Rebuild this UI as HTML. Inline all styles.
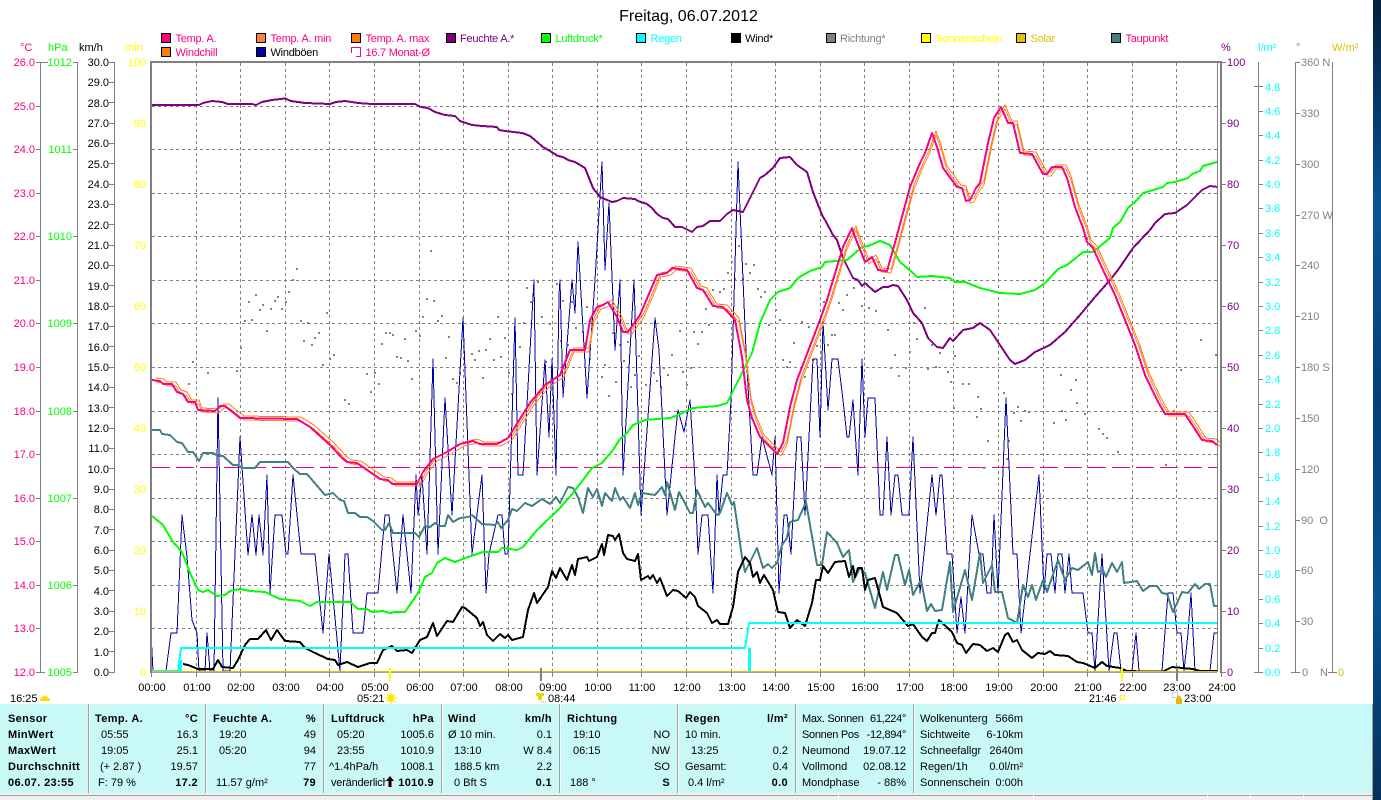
<!DOCTYPE html>
<html lang="de"><head><meta charset="utf-8"><title>Freitag, 06.07.2012</title>
<style>
html,body{margin:0;padding:0;background:#fff;overflow:hidden}
svg{display:block}
text{font-family:"Liberation Sans",sans-serif;font-size:11px;white-space:pre}
.b{font-weight:bold;letter-spacing:.35px}
.e{text-anchor:end}
.m{text-anchor:middle}
.l text{letter-spacing:-.25px}
.s{letter-spacing:-.3px}
.c{shape-rendering:crispEdges}
polyline{fill:none;stroke-linejoin:round}
</style></head><body>
<svg width="1381" height="800" viewBox="0 0 1381 800" xmlns="http://www.w3.org/2000/svg">
<defs>
<linearGradient id="desk" x1="0" y1="0" x2="0" y2="1">
<stop offset="0" stop-color="#04203f"/><stop offset=".14" stop-color="#063a6c"/><stop offset=".26" stop-color="#0a5494"/><stop offset=".5" stop-color="#073f78"/><stop offset=".75" stop-color="#085290"/><stop offset="1" stop-color="#05305c"/>
</linearGradient>
<polyline id="temp" points="152,380 160,381 163,384 172,384 177,392 183,394 188,402 195,402 198,410 215,411 220,406 225,406 240,418 297,419 310,427 330,445 342,458 347,462 357,463 380,479 388,480 392,484 417,484 423,472 433,459 447,452 460,444 473,441 480,444 497,444 508,438 530,403 545,385 560,375 570,350 585,350 590,320 597,307 603,305 608,302 617,317 623,332 628,332 640,315 657,275 667,273 672,268 687,270 697,288 703,290 713,306 723,307 735,320 742,357 747,400 752,418 760,437 777,454 783,443 790,407 797,380 820,320 827,300 843,247 852,228 855,237 865,262 872,257 878,270 887,271 893,250 910,187 920,163 925,153 932,133 937,147 943,168 957,187 962,188 966,201 970,200 976,188 980,183 988,143 994,118 1001,107 1008,123 1013,123 1020,153 1032,154 1043,174 1047,174 1052,167 1062,167 1067,178 1075,207 1083,228 1087,242 1093,248 1103,270 1115,295 1125,320 1135,345 1145,375 1157,400 1165,414 1185,414 1202,440 1212,441 1217,445"/>
</defs>
<rect width="1381" height="800" fill="#fff"/>

<!-- title -->
<text x="688.500" y="21" class="m" style="font-size:16px" fill="#000">Freitag, 06.07.2012</text>

<!-- legend -->
<g class="c" stroke="#000" stroke-width="1">
<rect x="161.500" y="33.500" width="9" height="9" fill="#ff0080"/>
<rect x="256.500" y="33.500" width="9" height="9" fill="#ff8040"/>
<rect x="351.500" y="33.500" width="9" height="9" fill="#ff8000"/>
<rect x="446.500" y="33.500" width="9" height="9" fill="#800080"/>
<rect x="541.500" y="33.500" width="9" height="9" fill="#00ff00"/>
<rect x="636.500" y="33.500" width="9" height="9" fill="#00ffff"/>
<rect x="731.500" y="33.500" width="9" height="9" fill="#000"/>
<rect x="826.500" y="33.500" width="9" height="9" fill="#808080"/>
<rect x="921.500" y="33.500" width="9" height="9" fill="#ffff00"/>
<rect x="1016.500" y="33.500" width="9" height="9" fill="#e0c000"/>
<rect x="1111.500" y="33.500" width="9" height="9" fill="#408080"/>
<rect x="161.500" y="47.500" width="9" height="9" fill="#ff8000"/>
<rect x="256.500" y="47.500" width="9" height="9" fill="#0000a0"/>
</g>
<path class="c" d="M351.500 53V47.500H360.500V56.500H356" fill="none" stroke="#ff0080"/>
<g class="l">
<text x="175.500" y="42" fill="#ff0080">Temp. A.</text>
<text x="270.500" y="42" fill="#ff0080">Temp. A. min</text>
<text x="365.500" y="42" fill="#ff0080">Temp. A. max</text>
<text x="460" y="42" fill="#800080">Feuchte A.*</text>
<text x="555.500" y="42" fill="#00ff00">Luftdruck*</text>
<text x="650.500" y="42" fill="#00ffff">Regen</text>
<text x="745" y="42" fill="#000">Wind*</text>
<text x="840" y="42" fill="#808080">Richtung*</text>
<text x="935.500" y="42" fill="#ffff00">Sonnenschein</text>
<text x="1030.500" y="42" fill="#e0c000">Solar</text>
<text x="1125.500" y="42" fill="#ff0080">Taupunkt</text>
<text x="175.500" y="56" fill="#ff0080">Windchill</text>
<text x="270.500" y="56" fill="#000">Windböen</text>
<text x="365.500" y="56" fill="#ff0080">16.7 Monat-Ø</text>
</g>

<!-- axis headers -->
<text x="20" y="51" fill="#ff0080">°C</text>
<text x="48" y="51" fill="#00ff00">hPa</text>
<text x="79" y="51" fill="#000">km/h</text>
<text x="125" y="51" fill="#ffff00">min</text>
<text x="1221" y="51" fill="#800080">%</text>
<text x="1258" y="51" fill="#00ffff">l/m²</text>
<text x="1296" y="51" fill="#808080">°</text>
<text x="1332" y="51" fill="#e0c000">W/m²</text>

<!-- left axes -->
<g class="c" fill="none" stroke="#808080">
<path d="M40.500 62V672M77.500 62V672M114.500 62V672"/>
<path d="M36 62.500H48M36 106.500H41M36 149.500H41M36 193.500H41M36 236.500H41M36 280.500H41M36 323.500H41M36 367.500H41M36 411.500H41M36 454.500H41M36 498.500H41M36 541.500H41M36 585.500H41M36 628.500H41M36 672.500H45"/>
<path d="M73 62.500H78M73 149.500H78M73 236.500H78M73 323.500H78M73 411.500H78M73 498.500H78M73 585.500H78M73 672.500H78"/>
<path d="M109 62.500H115M109 82.500H115M109 102.500H115M109 123.500H115M109 143.500H115M109 163.500H115M109 184.500H115M109 204.500H115M109 224.500H115M109 245.500H115M109 265.500H115M109 285.500H115M109 306.500H115M109 326.500H115M109 346.500H115M109 367.500H115M109 387.500H115M109 407.500H115M109 428.500H115M109 448.500H115M109 468.500H115M109 489.500H115M109 509.500H115M109 529.500H115M109 550.500H115M109 570.500H115M109 590.500H115M109 611.500H115M109 631.500H115M109 651.500H115M109 672.500H115"/>
</g>
<g class="e" fill="#ff0080">
<text x="35" y="66">26.0</text><text x="35" y="110">25.0</text><text x="35" y="153">24.0</text><text x="35" y="197">23.0</text><text x="35" y="240">22.0</text><text x="35" y="284">21.0</text><text x="35" y="327">20.0</text><text x="35" y="371">19.0</text><text x="35" y="415">18.0</text><text x="35" y="458">17.0</text><text x="35" y="502">16.0</text><text x="35" y="545">15.0</text><text x="35" y="589">14.0</text><text x="35" y="632">13.0</text><text x="35" y="676">12.0</text>
</g>
<g class="e" fill="#00ff00">
<text x="72" y="66">1012</text><text x="72" y="153">1011</text><text x="72" y="240">1010</text><text x="72" y="327">1009</text><text x="72" y="415">1008</text><text x="72" y="502">1007</text><text x="72" y="589">1006</text><text x="72" y="676">1005</text>
</g>
<g class="e" fill="#000">
<text x="109" y="66">30.0</text><text x="109" y="86">29.0</text><text x="109" y="107">28.0</text><text x="109" y="127">27.0</text><text x="109" y="147">26.0</text><text x="109" y="168">25.0</text><text x="109" y="188">24.0</text><text x="109" y="208">23.0</text><text x="109" y="229">22.0</text><text x="109" y="249">21.0</text><text x="109" y="269">20.0</text><text x="109" y="290">19.0</text><text x="109" y="310">18.0</text><text x="109" y="330">17.0</text><text x="109" y="351">16.0</text><text x="109" y="371">15.0</text><text x="109" y="391">14.0</text><text x="109" y="412">13.0</text><text x="109" y="432">12.0</text><text x="109" y="452">11.0</text><text x="109" y="473">10.0</text><text x="109" y="493">9.0</text><text x="109" y="513">8.0</text><text x="109" y="534">7.0</text><text x="109" y="554">6.0</text><text x="109" y="574">5.0</text><text x="109" y="595">4.0</text><text x="109" y="615">3.0</text><text x="109" y="635">2.0</text><text x="109" y="656">1.0</text><text x="109" y="676">0.0</text>
</g>
<g class="e" fill="#ffff00">
<text x="146" y="66">100</text><text x="146" y="127">90</text><text x="146" y="188">80</text><text x="146" y="249">70</text><text x="146" y="310">60</text><text x="146" y="371">50</text><text x="146" y="432">40</text><text x="146" y="493">30</text><text x="146" y="554">20</text><text x="146" y="615">10</text><text x="146" y="676">0</text>
</g>

<!-- grid -->
<g class="c" fill="none" stroke="#808080" stroke-dasharray="3 3">
<path d="M152 106.500H1217M152 149.500H1217M152 193.500H1217M152 236.500H1217M152 280.500H1217M152 323.500H1217M152 367.500H1217M152 411.500H1217M152 454.500H1217M152 498.500H1217M152 541.500H1217M152 585.500H1217M152 628.500H1217"/>
<path d="M196.500 63V672M240.500 63V672M285.500 63V672M329.500 63V672M374.500 63V672M419.500 63V672M463.500 63V672M508.500 63V672M552.500 63V672M597.500 63V672M641.500 63V672M686.500 63V672M731.500 63V672M775.500 63V672M820.500 63V672M864.500 63V672M909.500 63V672M953.500 63V672M998.500 63V672M1043.500 63V672M1087.500 63V672M1132.500 63V672M1176.500 63V672"/>
</g>
<path class="c" d="M152 467.500H1217" stroke="#ff0080" stroke-dasharray="18 6" fill="none"/>

<!-- wind direction dots -->
<path class="c" fill="none" stroke="#808080" stroke-width="2" d="M192 362h2M188 384h2M207 373h2M236 371h2M240 348h2M244 321h2M251 320h2M248 302h2M255 295h2M262 305h2M259 310h2M266 331h2M270 309h2M274 301h2M277 297h2M281 309h2M285 302h2M288 292h2M292 280h2M296 269h2M300 321h2M307 323h2M303 341h2M311 345h2M314 338h2M318 333h2M326 313h2M322 365h2M329 359h2M333 355h2M344 400h2M348 404h2M366 374h2M374 373h2M370 392h2M378 384h2M381 344h2M385 333h2M389 333h2M392 335h2M396 357h2M400 358h2M404 339h2M407 361h2M411 379h2M415 331h2M419 336h2M422 317h2M426 299h2M433 301h2M430 251h2M437 321h2M441 316h2M448 337h2M445 358h2M452 379h2M456 383h2M459 373h2M471 354h2M474 360h2M478 351h2M485 350h2M482 378h2M489 339h2M493 360h2M497 317h2M500 357h2M504 338h2M508 373h2M511 394h2M523 323h2M519 347h2M526 288h2M530 302h2M537 282h2M541 317h2M545 362h2M549 324h2M556 284h2M560 341h2M562 301h2M571 302h2M575 328h2M586 307h2M567 345h2M582 332h2M589 359h2M604 365h2M601 377h2M612 333h2M615 382h2M608 396h2M623 361h2M627 342h2M619 345h2M630 387h2M634 375h2M638 356h2M645 385h2M653 373h2M656 381h2M660 387h2M663 368h2M667 375h2M671 355h2M679 331h2M682 372h2M686 385h2M690 368h2M693 332h2M697 344h2M701 332h2M705 309h2M708 325h2M712 290h2M719 292h2M723 289h2M727 273h2M731 262h2M734 279h2M738 246h2M742 279h2M745 264h2M749 273h2M753 265h2M757 289h2M760 297h2M764 292h2M768 325h2M775 310h2M779 320h2M782 360h2M786 367h2M789 362h2M793 343h2M801 322h2M804 377h2M808 327h2M812 360h2M816 346h2M823 302h2M827 345h2M831 335h2M834 335h2M838 303h2M842 310h2M846 295h2M853 288h2M861 306h2M868 308h2M875 311h2M878 262h2M883 278h2M887 330h2M890 368h2M894 355h2M898 376h2M905 368h2M909 352h2M913 323h2M916 339h2M920 323h2M924 308h2M927 369h2M931 345h2M935 367h2M939 353h2M947 372h2M950 382h2M954 356h2M962 384h2M968 384h2M977 397h2M953 408h2M976 417h2M980 409h2M987 441h2M983 468h2M1006 459h2M1008 441h2M1013 413h2M1017 407h2M1020 421h2M1024 411h2M1028 412h2M1053 423h2M1061 411h2M1065 420h2M1076 403h2M1084 414h2M1098 429h2M1102 434h2M1106 438h2M1117 452h2M1165 465h2M1173 411h2M1003 393h2M1060 375h2M1070 390h2M1075 380h2M1180 370h2M1200 340h2M1215 355h2"/>

<!-- gusts -->
<polyline class="c" stroke="#0000a0" stroke-width="1" points="151,633 153,671 166,671 171,633 177,633 182,515 187,557 192,620 197,633 199,671 205,671 207,633 210,671 214,671 218,398 223,671 230,671 240,437 248,555 252,515 256,555 259,515 263,555 267,475 270,593 275,515 282,515 286,554 288,554 293,475 301,554 315,554 323,633 329,554 340,671 345,554 348,554 353,633 363,633 367,593 378,593 385,515 389,515 397,593 403,515 411,593 416,475 418,515 422,475 427,554 433,359 438,554 445,398 452,515 463,318 472,554 482,475 486,593 489,554 498,515 502,515 505,554 508,554 515,318 518,475 523,475 534,280 537,475 545,360 549,437 552,359 556,475 559,295 560,280 563,397 572,280 575,313 578,242 587,398 595,280 602,162 605,270 609,203 615,350 620,280 623,475 634,280 641,515 655,318 659,350 667,515 675,437 678,410 684,432 690,400 695,480 698,554 702,515 708,515 713,593 717,475 719,515 723,475 727,475 731,400 738,162 746,350 753,475 757,475 762,437 772,475 775,437 779,593 784,515 787,515 791,554 797,437 801,437 805,515 813,359 817,359 820,437 823,322 828,410 832,359 838,359 843,400 847,437 849,437 853,400 858,475 862,359 865,437 868,398 875,398 880,515 883,515 887,437 891,515 895,475 898,475 902,515 909,515 913,437 920,593 932,475 936,515 940,475 942,475 947,554 952,554 957,633 961,597 965,633 972,515 979,554 983,554 987,593 991,593 994,515 998,593 1006,398 1013,554 1017,554 1021,633 1039,475 1044,593 1047,554 1051,554 1055,593 1058,554 1062,554 1065,593 1069,554 1072,593 1083,593 1088,633 1092,633 1095,671 1102,554 1109,671 1114,633 1117,633 1121,671 1132,671 1136,633 1139,671 1162,671 1168,593 1173,593 1177,633 1181,633 1184,671 1188,633 1191,593 1195,671 1210,671 1214,633 1217,633"/>

<!-- dewpoint -->
<polyline class="c" stroke="#408080" stroke-width="2" points="150,430 160,430 162,434 170,435 177,442 182,443 188,452 193,452 199,461 203,453 213,453 218,456 223,456 233,465 237,465 242,468 255,468 260,462 288,462 293,468 300,474 307,474 325,495 333,493 340,500 344,501 348,513 355,513 360,517 367,517 373,521 382,530 385,530 389,523 393,533 415,533 419,537 425,526 430,527 435,523 440,526 445,526 448,515 453,522 460,518 468,517 472,515 482,524 495,525 498,522 501,528 508,520 512,509 517,511 525,503 532,506 542,499 550,504 556,497 560,503 568,487 573,488 578,497 583,513 588,488 593,497 597,489 602,506 605,493 612,501 615,488 620,500 623,497 630,508 635,493 638,505 642,493 655,495 662,487 665,495 667,482 675,510 679,492 685,503 690,513 693,513 697,490 705,507 708,503 717,515 720,513 727,493 732,505 734,502 742,557 745,572 757,548 763,568 768,564 772,568 777,563 782,545 787,538 790,522 798,520 806,502 817,565 822,565 827,532 837,543 843,557 849,550 853,582 860,568 865,573 875,608 883,572 887,590 895,555 898,555 905,585 909,570 913,595 921,580 927,611 931,604 935,611 942,610 950,562 953,612 965,570 972,600 980,553 983,583 992,565 995,592 1002,592 1008,618 1017,623 1023,585 1028,597 1032,585 1036,600 1043,580 1047,592 1058,560 1065,580 1072,568 1078,570 1088,562 1092,575 1095,553 1098,572 1103,570 1106,577 1112,563 1117,572 1122,562 1124,583 1137,581 1143,591 1150,586 1157,586 1162,593 1167,594 1173,612 1182,592 1188,593 1195,584 1199,589 1205,584 1210,584 1214,606 1217,606"/>

<!-- wind -->
<polyline class="c" stroke="#000" stroke-width="2" points="183,664 188,665 198,669 213,669 218,660 222,667 233,668 238,660 245,645 250,639 258,639 266,630 271,640 277,630 285,641 300,642 305,648 315,653 328,659 335,660 338,665 347,662 358,667 370,663 377,663 383,650 392,646 397,651 407,650 412,653 420,640 427,637 433,623 437,636 447,621 453,622 462,607 465,608 477,618 480,626 483,622 487,635 493,641 500,634 505,638 508,635 512,640 523,637 528,610 534,593 537,603 548,587 552,571 556,578 560,568 567,580 572,565 575,575 578,559 587,557 589,561 597,557 602,544 604,555 608,535 613,536 615,540 619,534 623,553 627,559 635,561 638,554 641,580 648,576 650,579 653,575 657,583 660,578 667,596 673,590 678,591 686,598 690,592 695,597 698,606 707,613 712,623 717,620 720,624 728,624 733,607 738,572 745,557 750,563 753,577 757,572 760,583 764,575 773,590 778,612 785,613 790,628 797,620 805,626 812,603 816,580 820,580 823,566 828,573 835,562 845,561 849,577 853,566 855,577 858,568 862,568 865,590 868,580 875,578 883,607 897,613 908,626 913,624 922,637 927,641 932,633 935,633 939,620 952,632 957,643 962,645 966,653 973,644 980,645 987,651 993,648 998,652 1005,635 1008,633 1013,642 1017,640 1022,650 1032,658 1038,653 1045,654 1050,651 1055,655 1068,656 1077,662 1083,663 1095,668 1102,662 1107,666 1120,668 1127,671 1162,672 1172,667 1193,669 1200,671 1217,671"/>

<!-- rain -->
<rect x="179" y="660" width="3" height="12" fill="#00ffff" class="c"/>
<rect x="748" y="648" width="3" height="24" fill="#00ffff" class="c"/>
<polyline class="c" stroke="#00ffff" stroke-width="2" points="152,671 178,671 181,648 745,648 749,623 1217,623"/>

<!-- humidity -->
<polyline class="c" stroke="#800080" stroke-width="2" points="152,105 199,105 203,103 212,101 222,102 228,104 252,104 256,105 262,102 272,100 285,98.500 291,101 305,103 330,104 336,102 345,101 358,103 372,104 415,104 421,107 428,108 435,112 445,115 455,116 460,121 472,125 482,126 497,127 499,130 505,131 522,133 525,134 530,136 536,141 543,147 550,151 558,156 563,157 568,160 575,162 585,168 593,188 600,197 612,202 617,201 623,198 635,199 638,201 647,204 652,208 657,214 663,218 668,219 675,227 682,227 692,232 697,227 703,226 710,221 720,221 727,214 733,210 743,212 753,192 760,178 765,175 773,168 780,158 790,157 797,165 807,172 813,192 822,215 825,220 833,235 837,240 843,258 853,278 858,280 862,286 865,283 875,292 883,287 888,287 893,285 898,286 907,300 913,313 922,323 928,338 937,347 943,348 950,338 953,341 963,330 973,328 980,323 990,330 1000,345 1010,360 1015,364 1025,360 1035,352 1050,345 1065,332 1080,315 1095,297 1110,280 1118,270 1133,248 1150,230 1155,223 1165,214 1175,213 1187,205 1202,190 1210,186 1218,187"/>

<!-- pressure -->
<polyline class="c" stroke="#00ff00" stroke-width="2" points="152,516 163,525 173,542 182,552 190,573 198,590 203,592 208,590 217,596 225,595 230,591 240,589 250,591 265,592 280,599 300,601 310,606 317,602 350,602 358,609 367,609 372,612 383,611 390,613 395,612 405,612 418,593 425,577 432,573 437,563 445,558 455,562 468,557 483,552 498,552 502,548 517,550 523,547 537,530 560,508 573,493 583,480 592,468 602,463 613,450 620,439 627,433 633,425 645,420 670,418 678,415 693,408 717,406 727,403 740,377 752,353 760,323 770,300 778,292 790,288 798,278 810,271 822,267 825,262 847,260 862,247 868,246 880,241 890,245 900,262 913,273 917,277 932,276 950,278 955,282 965,282 980,288 1000,293 1020,294 1035,290 1045,283 1058,269 1067,265 1077,257 1083,252 1093,252 1110,238 1113,228 1120,222 1128,208 1137,200 1143,193 1150,191 1163,187 1167,183 1175,182 1188,178 1192,174 1200,171 1203,166 1217,162"/>

<!-- temperature family -->
<use class="c" href="#temp" transform="translate(4,2)" stroke="#ff8040" stroke-width="1" fill="none"/>
<use class="c" href="#temp" transform="translate(4,-2)" stroke="#ff8000" stroke-width="1" fill="none"/>
<use class="c" href="#temp" stroke="#ff0080" stroke-width="2" fill="none"/>

<!-- frame -->
<g class="c">
<rect x="150" y="61" width="2" height="612" fill="#808080"/>
<rect x="150" y="61" width="1072" height="2" fill="#808080"/>
<rect x="1220" y="61" width="2" height="612" fill="#808080"/>
<rect x="1217" y="63" width="1" height="609" fill="#808080"/>
<rect x="152" y="671" width="1065" height="1" fill="#e0c000"/>
<rect x="152" y="672" width="1065" height="1" fill="#a0a0a0"/>
</g>

<!-- x ticks -->
<path class="c" fill="none" stroke="#808080" d="M151.500 672V677M196.500 672V677M240.500 672V677M285.500 672V677M329.500 672V677M374.500 672V677M419.500 672V677M463.500 672V677M508.500 672V677M552.500 672V677M597.500 672V677M641.500 672V677M686.500 672V677M731.500 672V677M775.500 672V677M820.500 672V677M864.500 672V677M909.500 672V677M953.500 672V677M998.500 672V677M1043.500 672V677M1087.500 672V677M1132.500 672V677M1176.500 672V677M1221.500 672V677"/>
<rect x="389" y="668" width="2" height="13" fill="#ffff00"/>
<rect x="540" y="668" width="2" height="13" fill="#808080"/>
<rect x="1121" y="668" width="2" height="13" fill="#ffff00"/>
<rect x="1176" y="668" width="2" height="13" fill="#808080"/>

<g class="m" fill="#000">
<text x="152" y="691">00:00</text><text x="197" y="691">01:00</text><text x="241" y="691">02:00</text><text x="286" y="691">03:00</text><text x="330" y="691">04:00</text><text x="375" y="691">05:00</text><text x="420" y="691">06:00</text><text x="464" y="691">07:00</text><text x="509" y="691">08:00</text><text x="553" y="691">09:00</text><text x="598" y="691">10:00</text><text x="642" y="691">11:00</text><text x="687" y="691">12:00</text><text x="732" y="691">13:00</text><text x="776" y="691">14:00</text><text x="821" y="691">15:00</text><text x="865" y="691">16:00</text><text x="910" y="691">17:00</text><text x="954" y="691">18:00</text><text x="999" y="691">19:00</text><text x="1044" y="691">20:00</text><text x="1088" y="691">21:00</text><text x="1133" y="691">22:00</text><text x="1177" y="691">23:00</text><text x="1222" y="691">24:00</text>
</g>

<!-- sun/moon markers -->
<text x="10" y="702">16:25</text>
<path d="M40 701a5 5 0 0 1 10 0z" fill="#ffe000"/>
<text x="357" y="702">05:21</text>
<circle cx="391" cy="698" r="3.500" fill="#ffe800"/>
<path d="M391 692v12M385 698h12M387 694l8 8M395 694l-8 8" stroke="#ffe800" fill="none"/>
<path d="M536 693h8v3h-2v3l-2 2-2-2v-3h-2z" fill="#e8d800"/>
<path d="M541 702h6" stroke="#a0a0e0" stroke-dasharray="1 1"/>
<text x="548" y="702">08:44</text>
<text x="1089" y="702">21:46</text>
<rect x="1120.500" y="695.500" width="4" height="4" fill="none" stroke="#ffff00"/>
<rect x="1172.500" y="692.500" width="5" height="5" fill="none" stroke="#9090e0" stroke-dasharray="1 1"/>
<path d="M1179 695l3 4v5h-6v-5z" fill="#e8b800"/>
<text x="1184" y="702">23:00</text>

<!-- right axes -->
<g class="c" fill="none" stroke="#808080">
<path d="M1222 62.500H1226M1222 123.500H1226M1222 184.500H1226M1222 245.500H1226M1222 306.500H1226M1222 367.500H1226M1222 428.500H1226M1222 489.500H1226M1222 550.500H1226M1222 611.500H1226M1222 672.500H1226"/>
<path d="M1258.500 62V672M1295.500 62V672M1332.500 62V672"/>
<path d="M1254 86.500H1263M1259 111.500H1263M1259 135.500H1263M1259 160.500H1263M1259 184.500H1263M1259 208.500H1263M1259 233.500H1263M1259 257.500H1263M1259 282.500H1263M1259 306.500H1263M1259 330.500H1263M1259 355.500H1263M1259 379.500H1263M1259 404.500H1263M1259 428.500H1263M1259 452.500H1263M1259 477.500H1263M1259 501.500H1263M1259 526.500H1263M1259 550.500H1263M1259 574.500H1263M1259 599.500H1263M1259 623.500H1263M1259 648.500H1263M1254 672.500H1263"/>
<path d="M1296 62.500H1300M1296 113.500H1300M1296 164.500H1300M1296 215.500H1300M1296 265.500H1300M1296 316.500H1300M1296 367.500H1300M1296 418.500H1300M1296 469.500H1300M1296 520.500H1300M1296 570.500H1300M1296 621.500H1300M1291 672.500H1300"/>
<path d="M1328 672.500H1337"/>
</g>
<g fill="#800080">
<text x="1227" y="66">100</text><text x="1227" y="127">90</text><text x="1227" y="188">80</text><text x="1227" y="249">70</text><text x="1227" y="310">60</text><text x="1227" y="371">50</text><text x="1227" y="432">40</text><text x="1227" y="493">30</text><text x="1227" y="554">20</text><text x="1227" y="615">10</text><text x="1227" y="676">0</text>
</g>
<g fill="#00ffff">
<text x="1265" y="91">4.8</text><text x="1265" y="115">4.6</text><text x="1265" y="139">4.4</text><text x="1265" y="164">4.2</text><text x="1265" y="188">4.0</text><text x="1265" y="212">3.8</text><text x="1265" y="237">3.6</text><text x="1265" y="261">3.4</text><text x="1265" y="286">3.2</text><text x="1265" y="310">3.0</text><text x="1265" y="334">2.8</text><text x="1265" y="359">2.6</text><text x="1265" y="383">2.4</text><text x="1265" y="408">2.2</text><text x="1265" y="432">2.0</text><text x="1265" y="456">1.8</text><text x="1265" y="481">1.6</text><text x="1265" y="505">1.4</text><text x="1265" y="530">1.2</text><text x="1265" y="554">1.0</text><text x="1265" y="578">0.8</text><text x="1265" y="603">0.6</text><text x="1265" y="627">0.4</text><text x="1265" y="652">0.2</text><text x="1265" y="676">0.0</text>
</g>
<g fill="#808080">
<text x="1301" y="66">360 N</text><text x="1301" y="117">330</text><text x="1301" y="168">300</text><text x="1301" y="219">270 W</text><text x="1301" y="269">240</text><text x="1301" y="320">210</text><text x="1301" y="371">180 S</text><text x="1301" y="422">150</text><text x="1301" y="473">120</text><text x="1301" y="524">90  O</text><text x="1301" y="574">60</text><text x="1301" y="625">30</text><text x="1302" y="676">0</text><text x="1320" y="676">N</text>
</g>
<text x="1338" y="676" fill="#e0c000">0</text>

<!-- info panel -->
<rect x="0" y="704" width="1373" height="89" fill="#c9f9f7"/>
<g class="c" fill="#a0a0a0">
<rect x="88" y="704" width="1" height="89"/><rect x="205" y="704" width="1" height="89"/><rect x="323" y="704" width="1" height="89"/><rect x="441" y="704" width="1" height="89"/><rect x="559" y="704" width="1" height="89"/><rect x="677" y="704" width="1" height="89"/><rect x="795" y="704" width="1" height="89"/><rect x="913" y="704" width="1" height="89"/>
</g>
<g class="c" fill="#fff">
<rect x="89" y="704" width="1" height="89"/><rect x="206" y="704" width="1" height="89"/><rect x="324" y="704" width="1" height="89"/><rect x="442" y="704" width="1" height="89"/><rect x="560" y="704" width="1" height="89"/><rect x="678" y="704" width="1" height="89"/><rect x="796" y="704" width="1" height="89"/><rect x="914" y="704" width="1" height="89"/>
</g>
<rect x="0" y="793" width="1373" height="7" fill="#f0f0f0"/>
<rect x="0" y="795" width="1373" height="1" fill="#a0a0a0"/>
<rect x="1372" y="704" width="1" height="96" fill="#a0a0a0"/>
<rect x="838" y="795" width="1" height="5" fill="#fff"/><rect x="1033" y="795" width="1" height="5" fill="#fff"/><rect x="1207" y="795" width="1" height="5" fill="#fff"/><rect x="1250" y="795" width="1" height="5" fill="#fff"/><rect x="1303" y="795" width="1" height="5" fill="#fff"/>

<g fill="#000">
<text class="b" x="8" y="722">Sensor</text>
<text class="b" x="8" y="738">MinWert</text>
<text class="b" x="8" y="754">MaxWert</text>
<text class="b" x="8" y="770">Durchschnitt</text>
<text class="b" x="8" y="786">06.07. 23:55</text>

<text class="b" x="95" y="722">Temp. A.</text><text class="b e" x="198" y="722">°C</text>
<text x="101" y="738">05:55</text><text class="e" x="198" y="738">16.3</text>
<text x="101" y="754">19:05</text><text class="e" x="198" y="754">25.1</text>
<text x="100" y="770">(+ 2.87 )</text><text class="e" x="198" y="770">19.57</text>
<text x="98" y="786">F: 79 %</text><text class="b e" x="198" y="786">17.2</text>

<text class="b" x="213" y="722">Feuchte A.</text><text class="b e" x="316" y="722">%</text>
<text x="219" y="738">19:20</text><text class="e" x="316" y="738">49</text>
<text x="219" y="754">05:20</text><text class="e" x="316" y="754">94</text>
<text class="e" x="316" y="770">77</text>
<text x="216" y="786">11.57 g/m²</text><text class="b e" x="316" y="786">79</text>

<text class="b" x="331" y="722">Luftdruck</text><text class="b e" x="434" y="722">hPa</text>
<text x="337" y="738">05:20</text><text class="e" x="434" y="738">1005.6</text>
<text x="337" y="754">23:55</text><text class="e" x="434" y="754">1010.9</text>
<text x="329" y="770">^1.4hPa/h</text><text class="e" x="434" y="770">1008.1</text>
<text x="331" y="786" style="letter-spacing:-.2px">veränderlich</text>
<rect x="386" y="775" width="8" height="13" fill="#e8e8e8"/>
<path d="M390 776l4 5h-2.500v6h-3v-6H386z" fill="#000"/>
<text class="b e" x="434" y="786">1010.9</text>

<text class="b" x="448" y="722">Wind</text><text class="b e" x="552" y="722">km/h</text>
<text x="448" y="738">Ø 10 min.</text><text class="e" x="552" y="738">0.1</text>
<text x="454" y="754">13:10</text><text class="e" x="552" y="754">W 8.4</text>
<text x="454" y="770">188.5 km</text><text class="e" x="552" y="770">2.2</text>
<text x="454" y="786">0 Bft S</text><text class="b e" x="552" y="786">0.1</text>

<text class="b" x="567" y="722">Richtung</text>
<text x="573" y="738">19:10</text><text class="e" x="670" y="738">NO</text>
<text x="573" y="754">06:15</text><text class="e" x="670" y="754">NW</text>
<text class="e" x="670" y="770">SO</text>
<text x="570" y="786">188 °</text><text class="b e" x="670" y="786">S</text>

<text class="b" x="685" y="722">Regen</text><text class="b e" x="788" y="722">l/m²</text>
<text x="685" y="738">10 min.</text>
<text x="691" y="754">13:25</text><text class="e" x="788" y="754">0.2</text>
<text x="685" y="770">Gesamt:</text><text class="e" x="788" y="770">0.4</text>
<text x="688" y="786">0.4 l/m²</text><text class="b e" x="788" y="786">0.0</text>

<text class="s" x="802" y="722">Max. Sonnen</text><text class="e s" x="906" y="722">61,224°</text>
<text class="s" x="802" y="738">Sonnen Pos</text><text class="e s" x="906" y="738">-12,894°</text>
<text x="802" y="754">Neumond</text><text class="e" x="906" y="754">19.07.12</text>
<text x="802" y="770">Vollmond</text><text class="e" x="906" y="770">02.08.12</text>
<text x="802" y="786">Mondphase</text><text class="e" x="906" y="786">- 88%</text>

<text x="920" y="722">Wolkenunterg</text><text class="e" x="1023" y="722">566m</text>
<text x="920" y="738">Sichtweite</text><text class="e" x="1023" y="738">6-10km</text>
<text x="920" y="754">Schneefallgr</text><text class="e" x="1023" y="754">2640m</text>
<text x="920" y="770">Regen/1h</text><text class="e" x="1023" y="770">0.0l/m²</text>
<text x="920" y="786">Sonnenschein</text><text class="e" x="1023" y="786">0:00h</text>
</g>

<!-- desktop strip -->
<rect x="1373" y="0" width="8" height="800" fill="url(#desk)"/>
</svg>
</body></html>
